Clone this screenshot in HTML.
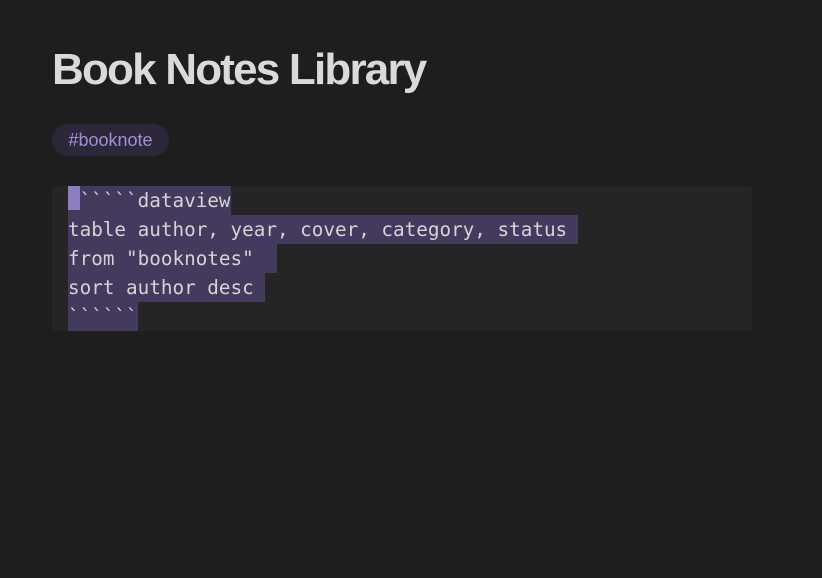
<!DOCTYPE html>
<html><head><meta charset="utf-8"><style>
html,body{margin:0;padding:0;background:#1e1e1e;width:822px;height:578px;overflow:hidden}
h1{position:absolute;left:52px;top:40px;margin:0;font:bold 44px/60px "Liberation Sans",sans-serif;color:#dadada;letter-spacing:-1.8px;white-space:nowrap}
.tag{position:absolute;left:52px;top:124px;width:117px;height:32px;border-radius:16px;background:#2c283a;color:#a08fd6;font:18px/32px "Liberation Sans",sans-serif;text-align:center}
.block{position:absolute;left:52px;top:186px;width:700px;height:145px;background:#252525;border-radius:4px}
.l{position:absolute;left:68px;height:29px;background:#433a5e;font-family:"DejaVu Sans Mono",monospace;font-size:19.3px;line-height:29px;color:#d4d4d4;white-space:pre}
.cur{position:absolute;left:68px;top:186px;width:12px;height:24px;background:#8d7ec4}
</style></head><body>
<h1>Book Notes Library</h1>
<div class="tag">#booknote</div>
<div class="block"></div>
<div class="l" style="top:186px;width:163px">&#96;&#96;&#96;&#96;&#96;&#96;dataview</div>
<div class="cur"></div>
<div class="l" style="top:215px;width:510px">table author, year, cover, category, status</div>
<div class="l" style="top:244px;width:209px">from "booknotes"</div>
<div class="l" style="top:273px;width:197px">sort author desc</div>
<div class="l" style="top:302px;width:70px;height:29px">&#96;&#96;&#96;&#96;&#96;&#96;</div>
</body></html>
